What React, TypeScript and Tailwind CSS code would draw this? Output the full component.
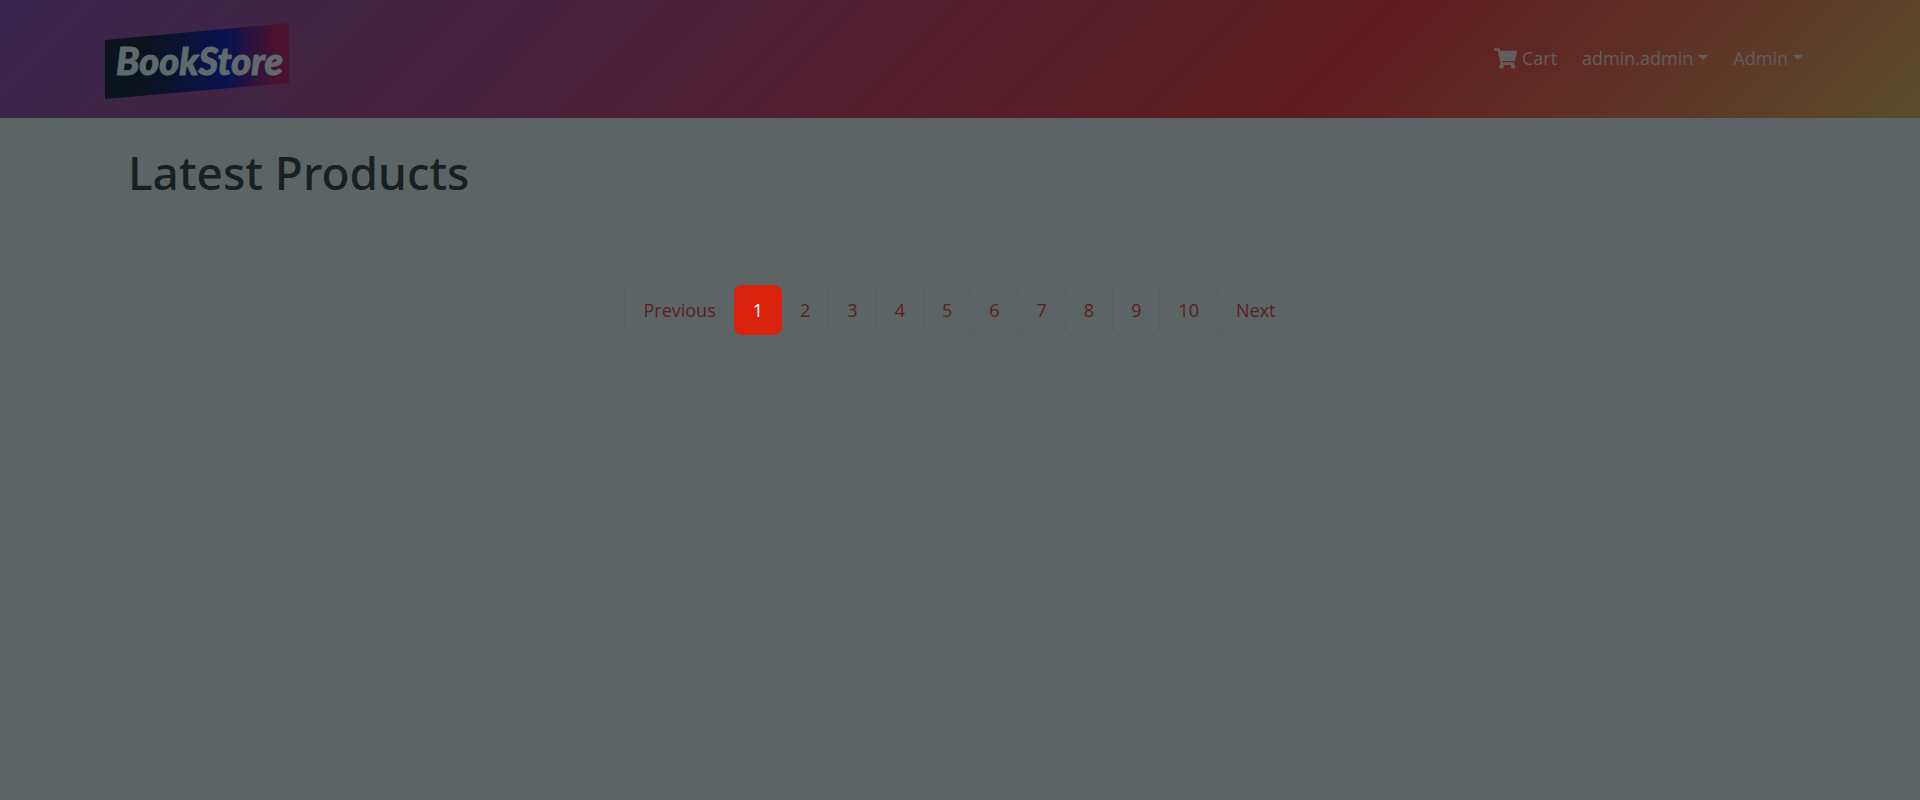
import React from "react";
import { FaShoppingCart } from "react-icons/fa";

const pages = ["2", "3", "4", "5", "6", "7", "8", "9", "10"];

const pageLink =
  "-ml-px flex h-[50px] items-center border border-[#586062] px-[18px] text-[#591f22]";

function Caret() {
  return (
    <svg className="mb-px h-[5px] w-[10px]" viewBox="0 0 10 5" fill="currentColor" aria-hidden="true">
      <path d="M0 0h10L5 5z" />
    </svg>
  );
}

function Logo() {
  return (
    <svg className="h-[78px] w-[186px]" viewBox="0 0 186 78" role="img" aria-label="BookStore">
      <defs>
        <linearGradient id="banner" x1="0" y1="0" x2="1" y2="0">
          <stop offset="0.2" stopColor="#0b131d" />
          <stop offset="0.66" stopColor="#081250" />
          <stop offset="0.93" stopColor="#4a122c" />
        </linearGradient>
      </defs>
      <path d="M1 18L185 1V61L1 77z" fill="url(#banner)" />
      <text
        x="12"
        y="53"
        fontSize="38"
        strokeWidth="1"
        strokeLinejoin="round"
        className="fill-[#606a6c] stroke-[#606a6c] font-['Lato',sans-serif] font-black italic"
      >
        BookStore
      </text>
    </svg>
  );
}

export default function App() {
  return (
    <div className="min-h-screen bg-[#5c6465] font-['Open_Sans','Noto_Sans',sans-serif] text-[18px] leading-[30px]">
      <header className="flex h-[118px] items-center justify-between bg-[linear-gradient(135deg,#38264f_0%,#601c1f_70%,#5b4b2b_100%)] pr-[117px] pl-[104px]">
        <a href="#home" className="pt-1">
          <Logo />
        </a>
        <nav className="flex items-center gap-[25px] pb-[2px] text-[#655d5c]">
          <a href="#cart" className="flex items-center gap-[5px]">
            <FaShoppingCart className="text-[23px]" />
            Cart
          </a>
          <button type="button" className="flex items-center gap-[5px]">
            admin.admin
            <Caret />
          </button>
          <button type="button" className="flex items-center gap-[5px]">
            Admin
            <Caret />
          </button>
        </nav>
      </header>
      <main className="px-32 pt-6">
        <h1 className="font-['Noto_Sans','Open_Sans',sans-serif] text-[46px] leading-[60px] font-medium text-[#182022]">
          Latest Products
        </h1>
        <nav aria-label="Pagination" className="mt-[83px] flex justify-center">
          <ul className="flex">
            <li>
              <a href="#previous" className={pageLink}>Previous</a>
            </li>
            <li className="z-10">
              <a
                href="#page-1"
                aria-current="page"
                className="-ml-px flex h-[50px] items-center rounded-lg border border-[#d9230f] bg-[#d9230f] px-[18px] text-white"
              >
                1
              </a>
            </li>
            {pages.map((page) => (
              <li key={page}>
                <a href={`#page-${page}`} className={`${pageLink} rounded-lg`}>{page}</a>
              </li>
            ))}
            <li>
              <a href="#next" className={pageLink}>Next</a>
            </li>
          </ul>
        </nav>
      </main>
    </div>
  );
}
